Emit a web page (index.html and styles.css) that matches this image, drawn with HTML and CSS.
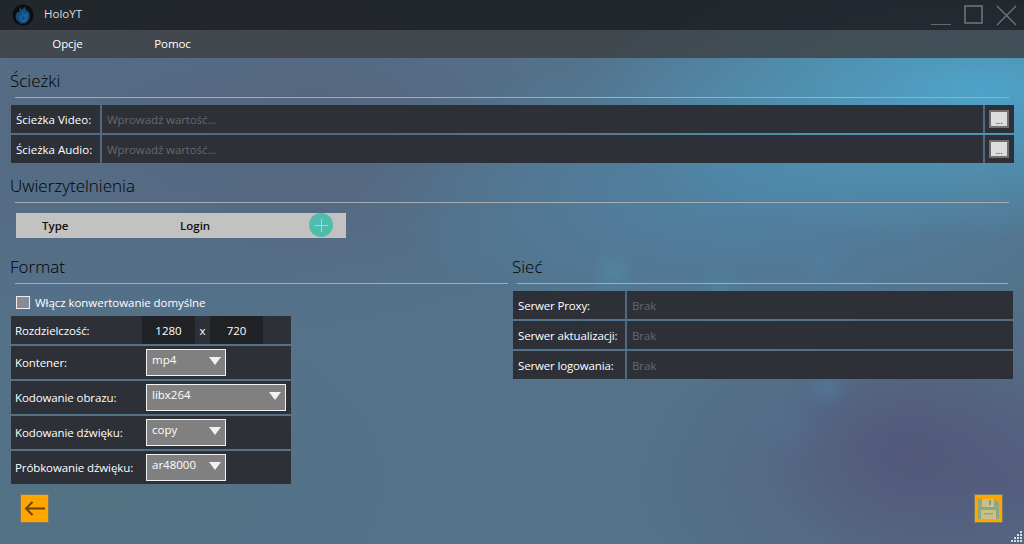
FILE: index.html
```html
<!DOCTYPE html>
<html lang="pl">
<head>
    <meta charset="UTF-8">
    <meta name="viewport" content="width=device-width, initial-scale=1.0">
    <title>HoloYT</title>
    <link rel="stylesheet" href="styles.css">
</head>
<body>
    <header class="titlebar">
        <svg class="logo" width="22" height="22" viewBox="0 0 22 22">
            <circle cx="11" cy="11" r="10.500" fill="#0b0d11"/>
            <path d="M8 3l2 3 3-3.500 1 3.500 3 2 1 4-1 4-3.500 3.500h-5L4.500 16 3.500 12 5 8l2 .5z" fill="#154a75"/>
            <path d="M10 7l2.500 3 2.500-2 1 4-1 4-3 2.500-3-1-2-3 1-3.500 2 .5z" fill="#1b6096"/>
            <path d="M11 11l1.500 2-.5 3-2-1z" fill="#134a78"/>
        </svg>
        <span class="app-name">HoloYT</span>
        <div class="window-buttons">
            <svg width="20" height="20" viewBox="0 0 20 20"><path d="M0 19.500h20" stroke="#66696b" stroke-width="1"/></svg>
            <svg width="19" height="19" viewBox="0 0 19 19"><rect x="1" y="1" width="17" height="17" fill="none" stroke="#75787a" stroke-width="1.500"/></svg>
            <svg width="21" height="21" viewBox="0 0 21 21"><path d="M1 1l19 19M20 1L1 20" stroke="#75787a" stroke-width="1.200"/></svg>
        </div>
    </header>

    <nav class="menu">
        <a class="menu-item">Opcje</a>
        <a class="menu-item">Pomoc</a>
    </nav>

    <main class="content">
        <section>
            <h2 class="section-title">Ścieżki</h2>
            <hr class="section-line">
            <div class="rows path-rows">
                <div class="row">
                    <label class="row-label path-label">Ścieżka Video:</label>
                    <input class="row-input" placeholder="Wprowadź wartość...">
                    <div class="browse-cell"><button class="browse">...</button></div>
                </div>
                <div class="row">
                    <label class="row-label path-label">Ścieżka Audio:</label>
                    <input class="row-input" placeholder="Wprowadź wartość...">
                    <div class="browse-cell"><button class="browse">...</button></div>
                </div>
            </div>
        </section>

        <section class="auth">
            <h2 class="section-title">Uwierzytelnienia</h2>
            <hr class="section-line">
            <div class="auth-table">
                <span class="col-type">Type</span>
                <span class="col-login">Login</span>
                <button class="add-btn">
                    <svg width="13" height="13" viewBox="0 0 13 13"><path d="M6.500 0v13M0 6.500h13" stroke="#a5dcd4" stroke-width="1"/></svg>
                </button>
            </div>
        </section>

        <div class="columns">
            <section class="format">
                <h2 class="section-title">Format</h2>
                <hr class="section-line">
                <label class="check-row"><span class="checkbox"></span>Włącz konwertowanie domyślne</label>
                <div class="rows format-rows">
                    <div class="row format-row res-row">
                        <span class="format-label">Rozdzielczość:</span>
                        <span class="num-box">1280</span>
                        <span class="times">x</span>
                        <span class="num-box">720</span>
                    </div>
                    <div class="row format-row">
                        <span class="format-label">Kontener:</span>
                        <div class="dropdown">mp4</div>
                    </div>
                    <div class="row format-row">
                        <span class="format-label">Kodowanie obrazu:</span>
                        <div class="dropdown wide">libx264</div>
                    </div>
                    <div class="row format-row">
                        <span class="format-label">Kodowanie dźwięku:</span>
                        <div class="dropdown">copy</div>
                    </div>
                    <div class="row format-row">
                        <span class="format-label">Próbkowanie dźwięku:</span>
                        <div class="dropdown">ar48000</div>
                    </div>
                </div>
            </section>

            <section class="network">
                <h2 class="section-title">Sieć</h2>
                <hr class="section-line">
                <div class="rows net-rows">
                    <div class="row">
                        <label class="row-label net-label">Serwer Proxy:</label>
                        <input class="row-input" placeholder="Brak">
                    </div>
                    <div class="row">
                        <label class="row-label net-label">Serwer aktualizacji:</label>
                        <input class="row-input" placeholder="Brak">
                    </div>
                    <div class="row">
                        <label class="row-label net-label">Serwer logowania:</label>
                        <input class="row-input" placeholder="Brak">
                    </div>
                </div>
            </section>
        </div>

        <div class="actions">
            <button class="square-btn">
                <svg width="21" height="15" viewBox="0 0 21 15"><path d="M21 7.500H2M8.500 1L2 7.500 8.500 14" fill="none" stroke="#6b4500" stroke-width="2"/></svg>
            </button>
            <button class="square-btn">
                <svg width="21" height="20" viewBox="0 0 21 20">
                    <path d="M0 0h17l4 4v16H0z" fill="#8fa77f"/>
                    <rect x="4" y="0" width="12" height="8" fill="#c8c088"/>
                    <rect x="11" y="1" width="2" height="5" fill="#8f9a72"/>
                    <rect x="3" y="11" width="15" height="9" fill="#c8c088"/>
                    <rect x="6" y="14" width="9" height="1.500" fill="#98a078"/>
                </svg>
            </button>
        </div>
    </main>

    <svg class="grip" width="14" height="14" viewBox="0 0 14 14">
        <path d="M10 1h2v2h-2zM7 4h2v2H7zM10 4h2v2h-2zM4 7h2v2H4zM7 7h2v2H7zM10 7h2v2h-2zM1 10h2v2H1zM4 10h2v2H4zM7 10h2v2H7zM10 10h2v2h-2z" fill="#d8dde2"/>
    </svg>
</body>
</html>
```

FILE: styles.css
```css
* {
    box-sizing: border-box;
}
html, body {
    height: 100%;
}
body {
    margin: 0;
    overflow: hidden;
    position: relative;
    font-family: "Open Sans", "Noto Sans", sans-serif;
    font-size: 12px;
    color: #fff;
    background-color: #54728a;
    background-image:
        radial-gradient(circle 24px at 613px 273px, rgba(78, 160, 175, .3), transparent),
        radial-gradient(circle 24px at 823px 265px, rgba(78, 140, 175, .2), transparent),
        radial-gradient(circle 24px at 842px 182px, rgba(78, 145, 175, .2), transparent),
        radial-gradient(circle 26px at 720px 290px, rgba(78, 160, 175, .2), transparent),
        radial-gradient(circle 24px at 827px 387px, rgba(78, 145, 180, .3), transparent),
        radial-gradient(circle 40px at 788px 423px, rgba(78, 125, 165, .2), transparent),
        radial-gradient(ellipse 150px 110px at 907px 450px, rgba(82, 86, 120, .8), transparent),
        radial-gradient(ellipse 360px 190px at 1000px 480px, rgba(84, 92, 125, .9), transparent),
        radial-gradient(ellipse 300px 180px at 100px 480px, rgba(82, 114, 130, .8), transparent),
        radial-gradient(ellipse 400px 150px at 980px 90px, #4ea3c9, transparent),
        radial-gradient(ellipse 380px 150px at 740px 190px, rgba(78, 135, 170, .8), transparent),
        radial-gradient(ellipse 240px 150px at 320px 130px, rgba(86, 100, 125, .8), transparent),
        radial-gradient(ellipse 620px 220px at 60px 130px, rgba(84, 104, 128, .8), transparent);
}

/* title bar + menu */
.titlebar {
    height: 30px;
    display: flex;
    align-items: center;
    background: rgba(30, 33, 37, .92);
    padding-left: 12px;
}
.logo {
    margin-top: -1px;
}
.app-name {
    margin-left: 10px;
    margin-top: -3px;
    font-size: 11.500px;
    color: #ddd;
}
.window-buttons {
    margin-left: auto;
    display: flex;
    align-items: flex-start;
    gap: 13px;
    padding-right: 7px;
    height: 30px;
    padding-top: 5px;
}
.menu {
    height: 28px;
    display: flex;
    align-items: center;
    background: rgba(60, 62, 64, .8);
    padding-left: 15px;
}
.menu-item {
    width: 105px;
    text-align: center;
    font-size: 11.500px;
    letter-spacing: -.1px;
    margin-top: -1px;
}

/* page */
.content {
    padding: 11px 10px 0 11px;
}
.section-title {
    margin: 0 0 0 -1px;
    font-size: 17px;
    font-weight: 300;
    line-height: 24px;
    color: #000;
}
.section-line {
    margin: 4px 5px 0 4px;
    border: 0;
    height: 1px;
    background: #a5adb3;
}
.rows {
    display: flex;
    flex-direction: column;
    gap: 2px;
}
.path-rows {
    margin-top: 7px;
}
.row {
    display: flex;
    height: 28px;
    background: #2d3037;
    align-items: center;
}
.row-label {
    height: 100%;
    display: flex;
    align-items: center;
    padding-left: 5px;
    border-right: 2px solid #4f6a80;
    flex: none;
    font-size: 11.500px;
}
.path-label {
    width: 91px;
}
.net-label {
    width: 114px;
    letter-spacing: -.15px;
}
.row-input {
    flex: 1;
    min-width: 0;
    height: 100%;
    border: 0;
    outline: 0;
    background: transparent;
    padding: 0 5px;
    font: inherit;
    font-size: 11.500px;
    letter-spacing: -.1px;
    color: #eee;
}
.row-input::placeholder {
    color: #66696d;
    opacity: 1;
}
.browse-cell {
    width: 31px;
    height: 100%;
    border-left: 2px solid #4f6a80;
    padding: 5px 5px 0 4px;
}
.browse {
    display: block;
    width: 20px;
    height: 18px;
    padding: 0;
    border: 2px solid #707070;
    background: #dddddd;
    color: #222;
    font: inherit;
    font-size: 9px;
    line-height: 18px;
}

/* auth */
.auth {
    margin-top: 11px;
}
.auth-table {
    margin: 10px 0 0 5px;
    width: 330px;
    height: 25px;
    background: #c2c2c0;
    color: #111;
    display: flex;
    align-items: center;
    font-size: 11.500px;
    font-weight: 600;
    position: relative;
}
.col-type {
    margin-left: 26px;
    width: 138px;
}
.add-btn {
    position: absolute;
    left: 293px;
    top: 0;
    width: 24px;
    height: 24px;
    padding: 0;
    border: 0;
    border-radius: 50%;
    background: #4fbcae;
    display: flex;
    align-items: center;
    justify-content: center;
}

/* two columns */
.columns {
    margin-top: 17px;
    display: grid;
    grid-template-columns: 502px 1fr;
}
.check-row {
    display: flex;
    align-items: center;
    margin: 11px 0 0 5px;
    height: 14px;
    font-size: 11.500px;
    letter-spacing: -.05px;
}
.checkbox {
    width: 14px;
    height: 13px;
    border: 1px solid #eee;
    background: #8a8a94;
    margin-right: 5px;
}
.format-rows {
    margin-top: 7px;
    width: 280px;
}
.format-row {
    height: 33px;
}
.res-row {
    height: 28px;
}
.format-label {
    width: 131px;
    padding-left: 4px;
    flex: none;
    font-size: 11.500px;
    letter-spacing: -.1px;
}
.num-box {
    width: 53px;
    height: 100%;
    background: #212226;
    display: flex;
    align-items: center;
    justify-content: center;
    font-size: 11.500px;
}
.times {
    width: 15px;
    text-align: center;
    font-size: 11.500px;
}
.dropdown {
    position: relative;
    margin: 0 0 0 4px;
    width: 80px;
    height: 27px;
    border: 1px solid #f2f2f2;
    background: #808080;
    padding: 2px 0 0 5px;
    font-size: 11.500px;
    line-height: 16px;
}
.dropdown.wide {
    width: 140px;
}
.dropdown::after {
    content: "";
    position: absolute;
    right: 4px;
    top: 7px;
    border-left: 6px solid transparent;
    border-right: 6px solid transparent;
    border-top: 8px solid #f2f2f2;
}
.network {
    padding-right: 1px;
}
.network .section-line {
    margin-right: 5px;
}
.net-rows {
    margin-top: 7px;
}
.actions {
    display: flex;
    justify-content: space-between;
    padding: 0 11px 0 9px;
    margin-top: 10px;
}
.square-btn {
    width: 29px;
    height: 29px;
    padding: 0;
    border: 1px solid #7a7a6a;
    background: #ffa500;
    display: flex;
    align-items: center;
    justify-content: center;
}
.grip {
    position: absolute;
    right: 0;
    bottom: 0;
}
```
